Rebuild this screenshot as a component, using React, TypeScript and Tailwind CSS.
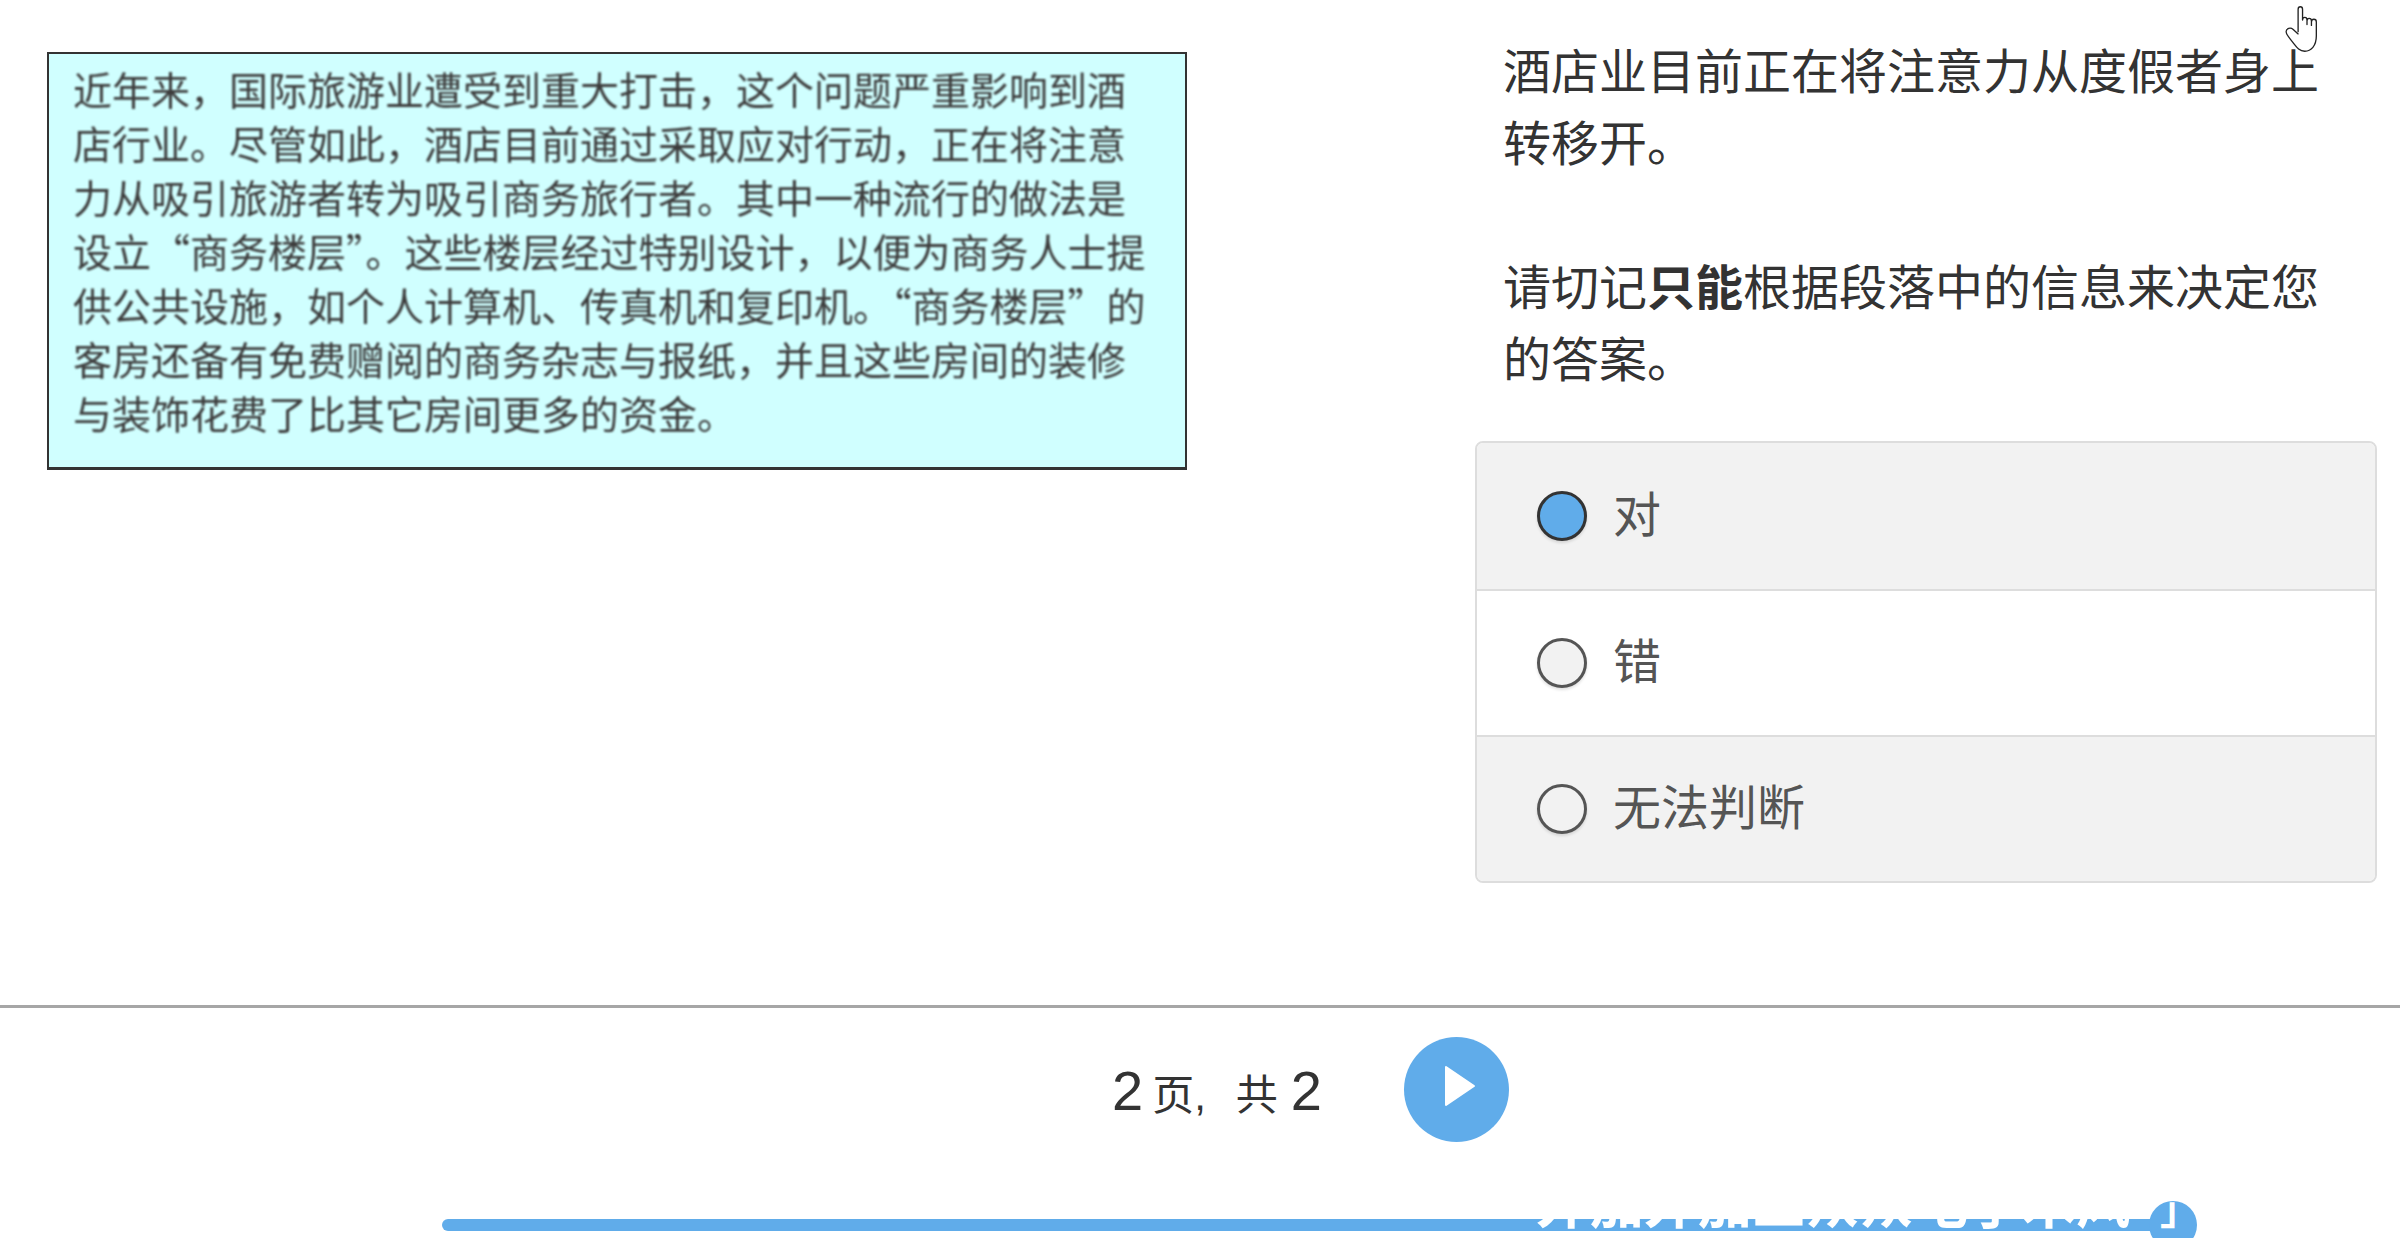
const leftLines = [
  "近年来，国际旅游业遭受到重大打击，这个问题严重影响到酒",
  "店行业。尽管如此，酒店目前通过采取应对行动，正在将注意",
  "力从吸引旅游者转为吸引商务旅行者。其中一种流行的做法是",
  "设立“商务楼层”。这些楼层经过特别设计，以便为商务人士提",
  "供公共设施，如个人计算机、传真机和复印机。“商务楼层”的",
  "客房还备有免费赠阅的商务杂志与报纸，并且这些房间的装修",
  "与装饰花费了比其它房间更多的资金。",
];

const options = [
  { label: "对", selected: true, shaded: true },
  { label: "错", selected: false, shaded: false },
  { label: "无法判断", selected: false, shaded: true },
];

const App = () => {
  return (
    <div className="relative flex h-[1238px] w-[2400px] flex-col overflow-hidden bg-white font-['Liberation_Sans','Noto_Sans_CJK_SC',sans-serif] text-[#333]">
      <div className="flex h-[1005px] shrink-0">
        <div className="w-[1475px] shrink-0 pl-[47px] pt-[52px]">
          <div className="h-[418px] w-[1140px] border-2 border-b-[3px] border-[#333] bg-[#d0ffff] pl-[24px] pt-[7px]">
            <div className="font-['Noto_Sans_CJK_SC',sans-serif] text-[39px] leading-[54px] text-[#3c3c3c] blur-[0.8px]">
              {leftLines.map((line) => (
                <div key={line} className="whitespace-nowrap">
                  {line}
                </div>
              ))}
            </div>
          </div>
        </div>
        <div className="w-[902px] shrink-0">
          <div className="pl-[28px] pt-[37px] text-[48px] leading-[72px]">
            <p>
              酒店业目前正在将注意力从度假者身上
              <br />
              转移开。
            </p>
            <p className="mt-[72px]">
              请切记<b>只能</b>根据段落中的信息来决定您
              <br />
              的答案。
            </p>
          </div>
          <div className="mt-[44px] overflow-hidden rounded-lg border-2 border-[#ddd]">
            {options.map((opt, i) => (
              <div
                key={opt.label}
                className={`flex h-[146px] items-center pl-[60px] ${i > 0 ? "border-t-2 border-[#ddd]" : ""} ${opt.shaded ? "bg-[#f2f2f2]" : "bg-white"}`}
              >
                <span
                  className={`h-[50px] w-[50px] shrink-0 rounded-full border-[3px] shadow-[0_2px_3px_rgba(0,0,0,0.12)] ${opt.selected ? "border-[#333] bg-[#60acea]" : "border-[#555] bg-[#f2f2f2]"}`}
                />
                <span className="ml-[26px] text-[48px] leading-none text-[#555]">
                  {opt.label}
                </span>
              </div>
            ))}
          </div>
        </div>
      </div>
      <div className="h-[3px] shrink-0 bg-[#a6a6a6]" />
      <div className="flex h-[211px] shrink-0 items-start pl-[1112px] pt-[29px]">
        <div className="mt-[24px] flex h-[60px] w-[292px] items-center whitespace-nowrap">
          <span className="text-[56px]">2</span>
          <span className="ml-[9px] mt-[8px] text-[42px]">页,</span>
          <span className="ml-[30px] mt-[8px] text-[42px]">共</span>
          <span className="ml-[13px] text-[56px]">2</span>
        </div>
        <div className="flex h-[105px] w-[105px] items-center justify-center rounded-full bg-[#60acea]">
          <svg width="32" height="44" viewBox="0 0 32 42" className="ml-[7px] mt-[-7px]">
            <path d="M2 2 L30 21 L2 40 Z" fill="#fff" stroke="#fff" strokeWidth="2" strokeLinejoin="round" />
          </svg>
        </div>
      </div>
      <div className="absolute left-[442px] top-[1219px] h-3 w-[1720px] rounded-l-full bg-[#60acea]" />
      <div className="absolute left-[2149px] top-[1201px] h-[48px] w-[48px] rounded-full bg-[#60acea]" />
      {/* footer caption sits on the bar, only its lower edge shows */}
      <div className="absolute left-[1536px] top-[1175px] whitespace-nowrap text-[54px] font-bold leading-[60px] text-white">
        外加外加三众众电了木风
      </div>
      <div className="absolute left-[2160px] top-[1190px] text-[40px] font-bold leading-[40px] text-white">
        」
      </div>
      <svg width="36" height="48" viewBox="0 0 80 108" className="absolute left-[2285px] top-[5px]">
        <path
          d="M29 60 V10 C29 2 39 2 39 10 V34 M39 34 C39 26 49 26 49 34 V44 M49 36 C49 28 59 28 59 36 V46 M59 38 C59 30 70 30 70 38 V70 C70 92 58 104 44 104 C30 104 24 92 14 80 C6 70 2 66 2 60 C2 52 12 50 18 55 L29 65"
          fill="#fff"
          stroke="#222"
          strokeWidth="3"
          strokeLinejoin="round"
          strokeLinecap="round"
        />
      </svg>
    </div>
  );
};

export default App;
